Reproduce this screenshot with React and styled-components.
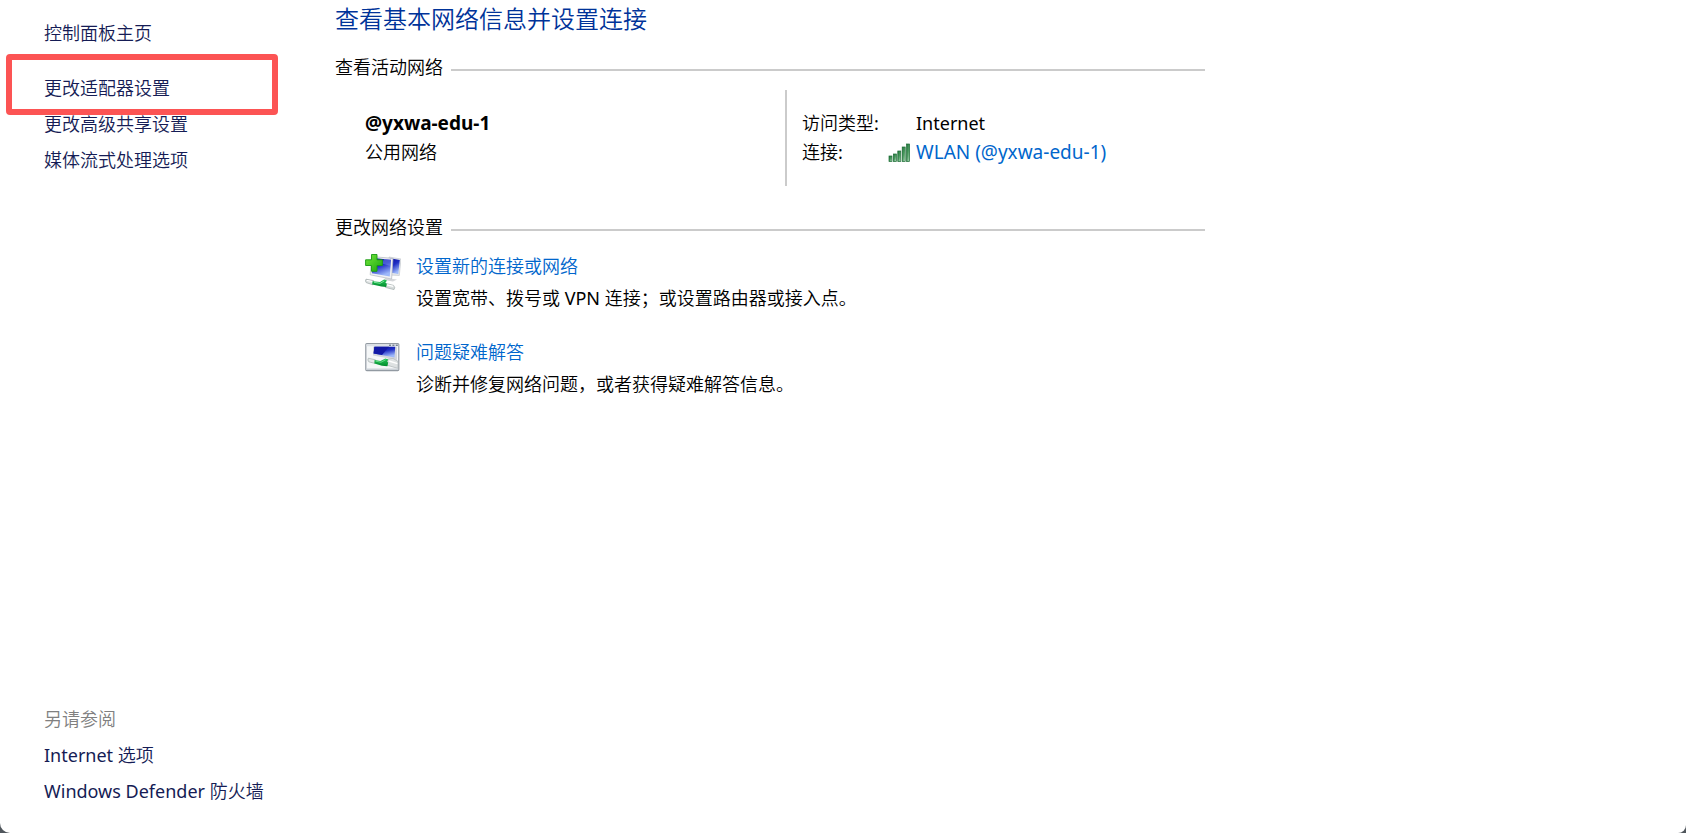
import React from "react";
import styled, { createGlobalStyle } from "styled-components";

const GlobalStyle = createGlobalStyle`
  * {
    box-sizing: border-box;
  }

  body {
    margin: 0;
    background: #50565c;
    font-family: "Noto Sans", "Noto Sans CJK SC DemiLight", "Noto Sans CJK SC Light", "Noto Sans CJK SC", sans-serif;
    font-size: 18px;
    color: #000;
  }
`;

const Window = styled.div`
  display: flex;
  min-height: 100vh;
  background: #fff;
  border-radius: 0 0 8px 10px;
`;

const Sidebar = styled.nav`
  display: flex;
  flex-direction: column;
  justify-content: space-between;
  flex: 0 0 335px;
  padding: 15px 0 24px 44px;
  line-height: 36px;
`;

const LinkList = styled.ul`
  margin: 0;
  padding: 0;
  list-style: none;
`;

const TaskList = styled(LinkList)`
  margin-top: 19px;
`;

const LinkItem = styled.li`
  position: relative;
`;

const Highlight = styled.span`
  position: absolute;
  top: -16px;
  left: -38px;
  width: 272px;
  height: 61px;
  border: 6px solid #fc5454;
  border-radius: 4px;
  pointer-events: none;
`;

const Link = styled.a`
  font-size: ${props => (props.$large ? "19px" : "18px")};
  color: ${props => (props.$nav ? "#151c55" : "#0066cc")};
  text-decoration: none;

  &:hover {
    text-decoration: underline;
  }
`;

const SeeAlso = styled.h2`
  margin: 0;
  font-size: 18px;
  font-weight: 400;
  color: #808080;
`;

const Main = styled.main`
  flex: 1;
  max-width: 870px;
`;

const Title = styled.h1`
  margin: 0 0 17px;
  font-size: 24px;
  font-weight: 400;
  line-height: 38px;
  color: #003399;
`;

const Section = styled.section`
  margin-bottom: 29px;
`;

const SectionTitle = styled.h2`
  display: flex;
  align-items: center;
  gap: 8px;
  margin: 0 0 11px;
  font-size: 18px;
  font-weight: 400;
  line-height: 24px;

  &::after {
    content: "";
    flex: 1;
    height: 2px;
    margin-top: 6px;
    background: #cbcbcb;
  }
`;

const Network = styled.div`
  display: flex;
  padding-left: 30px;
  line-height: 29px;
`;

const NetworkName = styled.div`
  flex: 0 0 420px;
  padding: 19px 0;
`;

const Name = styled.strong`
  display: block;
  font-size: 19px;
  font-weight: 700;
`;

const Details = styled.dl`
  display: grid;
  grid-template-columns: 86px auto;
  margin: 0;
  padding: 19px 0 19px 15px;
  border-left: 2px solid #cbcbcb;
`;

const Label = styled.dt``;

const Value = styled.dd`
  display: flex;
  align-items: center;
  margin: 0;
`;

const IconSlot = styled.span`
  display: flex;
  flex: 0 0 28px;
`;

const Options = styled(LinkList)`
  display: flex;
  flex-direction: column;
  gap: 22px;
  padding-left: 30px;
  line-height: 32px;
`;

const Option = styled.li`
  display: flex;
  gap: 15px;

  svg {
    flex: none;
    margin-top: 4px;
  }
`;

const Description = styled.p`
  margin: 0;
`;

const BARS = [13, 11, 8, 4, 1];

const SignalIcon = () => (
  <svg width="23" height="20" viewBox="0 0 23 20" aria-hidden="true">
    <defs>
      <linearGradient id="bar" x1="0" y1="0" x2="1" y2="1">
        <stop offset="0" stopColor="#1d7337" />
        <stop offset="0.5" stopColor="#4b9a60" />
        <stop offset="1" stopColor="#c5e8cc" />
      </linearGradient>
    </defs>
    {BARS.map((y, i) => (
      <rect
        key={y}
        x={1 + i * 4.4}
        y={y}
        width="3"
        height={18.6 - y}
        fill="url(#bar)"
        stroke="#1b6a34"
        strokeWidth="0.7"
      />
    ))}
  </svg>
);

const Cable = () => (
  <g>
    <path
      d="M1 25.2 8.5 26.6 8 30.8 1.2 28.6Q-.2 26.6 1 25.2Z"
      fill="#dfe3e3"
      stroke="#9ba5a5"
      strokeWidth="0.7"
    />
    <path d="M2 26.4 7.8 27.7" stroke="#fff" />
    <path
      d="M20.5 29.4 28.6 31.4Q30.6 33.4 29 35.6L20.4 33.4Z"
      fill="#d7dcdc"
      stroke="#a3adad"
      strokeWidth="0.7"
    />
    <path d="M22 30.8 28.3 32.4" stroke="#fff" strokeWidth="1.2" />
    <path
      d="M7.5 27.2 15 28 19 25.4 22 26.4 20.4 28.8 21.8 29.8 21.2 33 16.5 32.6 7.2 30.6Z"
      fill="url(#plug)"
    />
    <path d="M9 28.3 15.2 29.3 19.2 27" fill="none" stroke="#7ce59a" />
  </g>
);

const Gradients = () => (
  <defs>
    <linearGradient id="screen" x1="0" y1="0" x2="0.4" y2="1">
      <stop offset="0" stopColor="#060a9a" />
      <stop offset="0.5" stopColor="#1f2ec4" />
      <stop offset="1" stopColor="#9db8fa" />
    </linearGradient>
    <linearGradient id="plug" x1="0" y1="0" x2="0" y2="1">
      <stop offset="0" stopColor="#28c85a" />
      <stop offset="1" stopColor="#008a2c" />
    </linearGradient>
    <linearGradient id="plus" x1="0" y1="0" x2="1" y2="1">
      <stop offset="0" stopColor="#76e83c" />
      <stop offset="1" stopColor="#18a50e" />
    </linearGradient>
  </defs>
);

const NewConnectionIcon = () => (
  <svg width="36" height="36" viewBox="0 0 36 36" aria-hidden="true">
    <Gradients />
    <path d="M20 24 32 25.5 28 27.5 19 26Z" fill="#d5d7da" />
    <path d="M24 3 36 5 34.3 21.5 24 21Z" fill="#e3e6ea" stroke="#bfc4ca" strokeWidth="0.6" />
    <path d="M25 4.2 34.8 6 33.3 20 25 18.6Z" fill="url(#screen)" />
    <path d="M6.5 2.5 28 4.4 26.6 25 5.2 20.8Z" fill="#f0f1f4" stroke="#b3b8be" strokeWidth="0.7" />
    <path d="M8 4 26 5.8 24.8 22.6 6.8 19.2Z" fill="url(#screen)" />
    <path d="M19 5 26 5.8 25.6 12 17 9.5Z" fill="#8ba2f2" opacity="0.4" />
    <path
      d="M6.5.5H12V5.8H17.4V11.5H12V17.3H6.5V11.5H.6V5.8H6.5Z"
      fill="url(#plus)"
      stroke="#189a12"
      strokeWidth="0.9"
    />
    <Cable />
  </svg>
);

const TroubleshootIcon = () => (
  <svg width="36" height="36" viewBox="0 -4 36 36" aria-hidden="true">
    <rect x="0.8" y="-0.4" width="33" height="27" rx="1" fill="#f5f7f8" stroke="#929aa2" strokeWidth="1.2" />
    <path d="M1.4.2H33.2V2.2H1.4Z" fill="#dce1e6" />
    <path d="M24 1.2h2M27.4 1.2h2M30.8 1.2h2" stroke="#4c5a70" />
    <path d="M8 2.8H32V16L8 11.5Z" fill="#d3d6dc" />
    <path d="M9.4 2.8H30.2L29.5 13.6 8.6 9.6Z" fill="url(#screen)" />
    <path d="M9.4 2.8H24L17 11 8.6 9.6Z" fill="#1219a6" />
    <path
      d="M3.4 14.2 10.4 15.8 10 19.4 3.8 17.8Q2.2 16 3.4 14.2Z"
      fill="#e4e8e8"
      stroke="#a4adad"
      strokeWidth="0.7"
    />
    <path
      d="M22.5 15.2 28 14.4 33 17.4V24.4L22 21.2Z"
      fill="#dde1e2"
      stroke="#b0b8ba"
      strokeWidth="0.7"
    />
    <path d="M24 17 32.4 19.6" stroke="#fff" strokeWidth="1.4" />
    <path
      d="M9.6 16 15.4 17 20.4 14.4 23.4 15.6 22 17.6 23.2 18.6 22.4 22.2 17 21.8 9.4 19.4Z"
      fill="url(#plug)"
    />
    <path d="M10.6 17.2 16 18.2 20.6 15.8" fill="none" stroke="#79e397" strokeWidth="0.8" />
    <path d="M1.4 24.6H33.2V26H1.4Z" fill="#cbd1d7" />
  </svg>
);

const tasks = ["更改适配器设置", "更改高级共享设置", "媒体流式处理选项"];
const related = ["Internet 选项", "Windows Defender 防火墙"];

const options = [
  {
    icon: <NewConnectionIcon />,
    title: "设置新的连接或网络",
    text: "设置宽带、拨号或 VPN 连接；或设置路由器或接入点。"
  },
  {
    icon: <TroubleshootIcon />,
    title: "问题疑难解答",
    text: "诊断并修复网络问题，或者获得疑难解答信息。"
  }
];

export default () => (
  <>
    <GlobalStyle />
    <Window lang="zh-CN">
      <Sidebar>
        <div>
          <Link $nav href="#home">
            控制面板主页
          </Link>
          <TaskList>
            {tasks.map((task, i) => (
              <LinkItem key={task}>
                <Link $nav href="#task">
                  {task}
                </Link>
                {i === 0 && <Highlight />}
              </LinkItem>
            ))}
          </TaskList>
        </div>
        <div>
          <SeeAlso>另请参阅</SeeAlso>
          <LinkList>
            {related.map(item => (
              <LinkItem key={item}>
                <Link $nav href="#related">
                  {item}
                </Link>
              </LinkItem>
            ))}
          </LinkList>
        </div>
      </Sidebar>

      <Main>
        <Title>查看基本网络信息并设置连接</Title>
        <Section>
          <SectionTitle>查看活动网络</SectionTitle>
          <Network>
            <NetworkName>
              <Name>@yxwa-edu-1</Name>
              公用网络
            </NetworkName>
            <Details>
              <Label>访问类型:</Label>
              <Value>
                <IconSlot />
                Internet
              </Value>
              <Label>连接:</Label>
              <Value>
                <IconSlot>
                  <SignalIcon />
                </IconSlot>
                <Link $large href="#wlan">
                  WLAN (@yxwa-edu-1)
                </Link>
              </Value>
            </Details>
          </Network>
        </Section>

        <Section>
          <SectionTitle>更改网络设置</SectionTitle>
          <Options>
            {options.map(({ icon, title, text }) => (
              <Option key={title}>
                {icon}
                <div>
                  <Link href="#option">{title}</Link>
                  <Description>{text}</Description>
                </div>
              </Option>
            ))}
          </Options>
        </Section>
      </Main>
    </Window>
  </>
);
